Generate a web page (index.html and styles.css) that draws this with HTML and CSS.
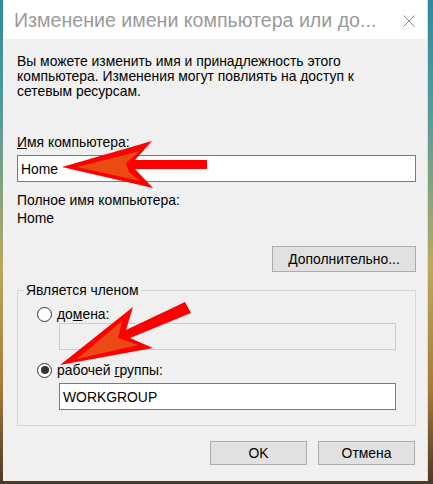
FILE: index.html
```html
<!DOCTYPE html>
<html lang="ru">
<head>
<meta charset="utf-8">
<title>Изменение имени компьютера</title>
<link rel="stylesheet" href="styles.css">
</head>
<body>
<div class="window">
  <div class="titlebar">
    <span class="title">Изменение имени компьютера или до...</span>
    <svg class="close" width="12" height="12" viewBox="0 0 12 12"><path d="M0.5 0.5 L11.5 11.5 M11.5 0.5 L0.5 11.5" stroke="#8a8a8a" stroke-width="1" fill="none"/></svg>
  </div>
  <div class="content">
    <p class="desc">Вы можете изменить имя и принадлежность этого<br>компьютера. Изменения могут повлиять на доступ к<br>сетевым ресурсам.</p>
    <div class="label first"><u>И</u>мя компьютера:</div>
    <div class="input">Home</div>
    <div class="label full">Полное имя компьютера:</div>
    <div class="value">Home</div>
    <div class="more-row"><button class="btn more"><u>Д</u>ополнительно...</button></div>
    <fieldset class="group">
      <legend>Является членом</legend>
      <div class="group-body">
        <div class="radio-row"><span class="radio"></span><span>до<u>м</u>ена:</span></div>
        <div class="input sub disabled"></div>
        <div class="radio-row second"><span class="radio checked"></span><span>рабочей <u>г</u>руппы:</span></div>
        <div class="input sub wg">WORKGROUP</div>
      </div>
    </fieldset>
    <div class="actions">
      <button class="btn act">OK</button>
      <button class="btn act">Отмена</button>
    </div>
  </div>
</div>
<svg class="arrows" width="433" height="484" viewBox="0 0 433 484">
  <polygon points="62,167 152,141 135,160 207,160 207,169 135,169 153,188" fill="#ff0000"/>
  <polygon points="77,167 140,151 126,163 129,172 140,181" fill="#eb4a14"/>
  <polygon points="60,365 133,307 126,330 185,302 191,313 130,338 153,348" fill="#ff0000"/>
  <polygon points="77,359 122,321 118,338 138,345" fill="#eb4a14"/>
</svg>
</body>
</html>
```
FILE: styles.css
```css
html, body {
  margin: 0;
  padding: 0;
}
body {
  width: 433px;
  height: 484px;
  overflow: hidden;
  position: relative;
  background: linear-gradient(to bottom, #2f8a9c 0%, #5a9c98 25%, #b9a862 55%, #a77a3c 80%, #4b3826 100%);
  font-family: "Liberation Sans", Arial, sans-serif;
  font-size: 13.9px;
  color: #000;
}
.window {
  margin-left: 3px;
  width: 425px;
  height: 481px;
  background: #f0f0f0;
  display: flex;
  flex-direction: column;
  box-sizing: border-box;
  border-right: 1px solid #d8dcdc;
}
.titlebar {
  height: 39px;
  flex: none;
  background: #fff;
  display: flex;
  align-items: center;
  padding: 2px 0 0 11px;
  box-sizing: border-box;
}
.title {
  font-size: 19.6px;
  color: #9a9a9a;
  white-space: nowrap;
}
.close {
  margin-left: auto;
  margin-right: 12px;
  flex: none;
}
.content {
  padding: 15px 11px 0 14px;
  display: flex;
  flex-direction: column;
}
.desc {
  margin: 0;
  line-height: 15px;
}
.label, .value {
  line-height: 15px;
}
.label.first {
  margin-top: 36px;
}
.input {
  height: 27px;
  box-sizing: border-box;
  border: 1px solid #7a7a7a;
  background: #fff;
  padding-left: 3px;
  display: flex;
  align-items: center;
  margin-top: 5px;
}
.label.full {
  margin-top: 11px;
}
.value {
  margin-top: 3px;
}
.more-row {
  display: flex;
  justify-content: flex-end;
  margin-top: 20px;
}
.btn {
  font: inherit;
  color: #000;
  background: #e1e1e1;
  border: 1px solid #adadad;
  padding: 0;
  margin: 0;
  box-sizing: border-box;
}
.more {
  width: 144px;
  height: 26px;
}
.group {
  margin: 10px 0 0 0;
  padding: 0;
  border: 1px solid #d6d6d6;
  min-width: 0;
}
.group legend {
  margin-left: 6px;
  padding: 0 2px;
  line-height: 16px;
}
.group-body {
  padding: 8px 19px 15px 19px;
}
.radio-row {
  display: flex;
  align-items: center;
  height: 16px;
  gap: 5px;
}
.radio-row.second {
  margin-top: 12px;
}
.radio {
  width: 15px;
  height: 15px;
  box-sizing: border-box;
  border: 1px solid #333;
  border-radius: 50%;
  background: #fff;
  display: flex;
  align-items: center;
  justify-content: center;
}
.radio.checked::after {
  content: "";
  width: 8px;
  height: 8px;
  border-radius: 50%;
  background: #333;
}
.input.sub {
  margin-left: 22px;
}
.input.disabled {
  margin-top: 1px;
  border-color: #cccccc;
  background: #f0f0f0;
}
.input.wg {
  margin-top: 5px;
}
.actions {
  display: flex;
  justify-content: flex-end;
  gap: 11px;
  margin-top: 15px;
  padding-right: 1px;
}
.act {
  width: 97px;
  height: 24px;
}
.arrows {
  position: absolute;
  left: 0;
  top: 0;
  pointer-events: none;
}
```
